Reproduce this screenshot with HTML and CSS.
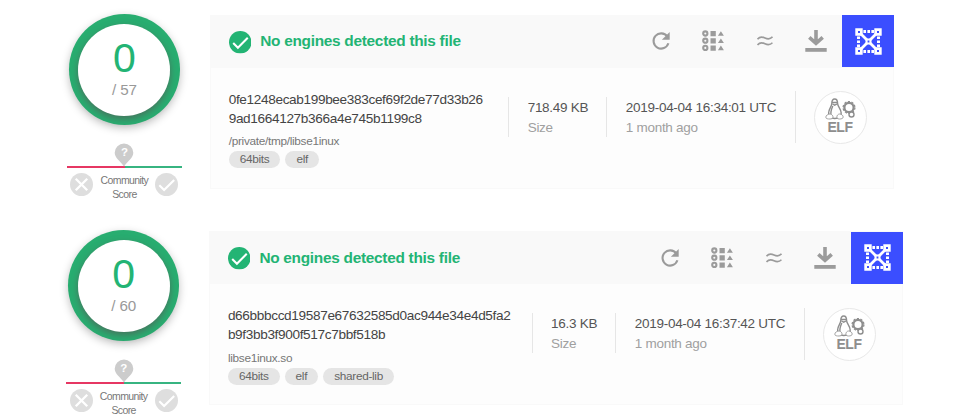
FILE: index.html
```
<!DOCTYPE html>
<html lang="en">
<head>
    <meta charset="UTF-8">
    <meta name="viewport" content="width=device-width, initial-scale=1.0">
    <title>File reports</title>
    <link rel="stylesheet" href="styles.css">
</head>
<body>
    <!-- Shared icons -->
    <svg class="sprite" width="0" height="0">
        <symbol id="icon-check" viewBox="0 0 24 24">
            <circle cx="12" cy="12" r="12" fill="currentColor"/>
            <path d="M4.5 12.8l5 5L20 7.2" fill="none" stroke="#fff" stroke-width="2.2"/>
        </symbol>
        <symbol id="icon-cross" viewBox="0 0 24 24">
            <circle cx="12" cy="12" r="12" fill="currentColor"/>
            <path d="M6 6l12 12M18 6L6 18" fill="none" stroke="#fff" stroke-width="2.4"/>
        </symbol>
        <symbol id="icon-pin" viewBox="0 0 20 24">
            <path d="M10 .5a9.3 9.3 0 0 1 9.3 9.3c0 5.2-5.5 8.2-9.3 13.7C6.2 18 .7 15 .7 9.8A9.3 9.3 0 0 1 10 .5z" fill="currentColor"/>
        </symbol>
        <symbol id="icon-refresh" viewBox="0 0 20 20">
            <path d="M16.3 5.5A7.6 7.6 0 1 0 17.4 12.3" fill="none" stroke="currentColor" stroke-width="2.1"/>
            <path d="M18.7 1v7.8h-7.8z" fill="currentColor"/>
        </symbol>
        <symbol id="icon-grid" viewBox="0 0 22 22">
            <g fill="none" stroke="currentColor" stroke-width="2.1">
                <circle cx="3.3" cy="3.5" r="2.1"/>
                <circle cx="3.3" cy="10.7" r="2.1"/>
                <circle cx="3.3" cy="17.9" r="2.1"/>
            </g>
            <path d="M8.500 1h5.300v5.300H8.500zM8.500 8.200h5.300v5.300H8.500zM8.500 15.400h5.300v5.300H8.500zM18.900 1.200l3 4.600h-6zM18.900 8.400l3 4.600h-6zM18.900 15.600l3 4.600h-6z" fill="currentColor"/>
        </symbol>
        <symbol id="icon-similar" viewBox="0 0 16 10">
            <path d="M.5 3.2C3 .2 5.500 .8 8 2s5 1.600 7.500-1.100M.5 9C3 6 5.500 6.600 8 7.800s5 1.600 7.500-1.100" fill="none" stroke="currentColor" stroke-width="1.600"/>
        </symbol>
        <symbol id="icon-download" viewBox="0 0 22 22">
            <path d="M11 0v12M4.3 7.300L11 13.300l6.700-6" fill="none" stroke="currentColor" stroke-width="3.600"/>
            <path d="M.3 18h21.400v3.800H.3z" fill="currentColor"/>
        </symbol>
        <symbol id="icon-graph" viewBox="0 0 27 27">
            <path d="M4 4l19 19M23 4L4 23" stroke="#fff" stroke-width="2.800"/>
            <path d="M8.400 3.500h10.600M8.400 23.500h10.600M3.500 8.400v10.600M23.500 8.400v10.600" stroke="#fff" stroke-width="3" stroke-dasharray="2.600 1.400"/>
            <path d="M.3.3h7.400v7.400H.3zM19.300.3h7.400v7.400h-7.400zM.3 19.300h7.400v7.400H.3zM19.300 19.300h7.400v7.400h-7.400zM10.500 10.500h6v6h-6z" fill="#fff"/>
            <path d="M3 3h2v2H3zM22 3h2v2h-2zM3 22h2v2H3zM22 22h2v2h-2zM12.600 12.600h1.800v1.800h-1.800z" fill="#3b4eff"/>
        </symbol>
        <symbol id="icon-linux" viewBox="0 0 31 22">
            <g fill="none" stroke="currentColor" stroke-width="1.400">
                <path d="M6.800 5.500C6.800 2.500 7.800 1 9.700 1s2.900 1.500 2.900 4.500c0 3 3.600 5.500 3.600 9.500 0 3-2 5.500-6.500 5.500S3.600 18 3.600 15c0-4 3.200-6.500 3.200-9.500z"/>
                <path d="M7 4.500h5.400M7.500 6l2.200 1.200L12 6M7.800 8c-1.500 3.500-2.300 5.500-1.800 8"/>
                <path d="M5 16c-2 0-4.200 1.500-4.200 3.200S3 21 5 21s3-1 3-2.200S6.500 16 5 16zM14.500 16c2 0 3.700 1.500 3.700 3S16.500 21 14.500 21s-2.600-1-2.600-2.200 1.100-2.800 2.600-2.800z" fill="#fff" stroke-width=".8"/>
            </g>
            <circle cx="24" cy="9.500" r="4.600" fill="none" stroke="currentColor" stroke-width="2.200"/>
            <circle cx="24" cy="9.500" r="5.900" fill="none" stroke="currentColor" stroke-width="1.300" stroke-dasharray="2.200 1.500"/>
            <circle cx="26.500" cy="16.500" r="2.500" fill="#fff" stroke="currentColor" stroke-width="1.400"/>
        </symbol>
    </svg>

    <section class="report">
        <aside class="score">
            <div class="ring">
                <div class="ring-inner">
                    <span class="positives">0</span>
                    <span class="total">/ 57</span>
                </div>
            </div>
            <div class="pin"><svg><use href="#icon-pin"/></svg><span>?</span></div>
            <div class="vote-bar"></div>
            <div class="votes">
                <svg><use href="#icon-cross"/></svg>
                <p>Community<br>Score</p>
                <svg><use href="#icon-check"/></svg>
            </div>
        </aside>
        <div class="card">
            <header class="card-header">
                <svg class="status"><use href="#icon-check"/></svg>
                <h2>No engines detected this file</h2>
                <div class="tool"><svg width="20" height="20"><use href="#icon-refresh"/></svg></div>
                <div class="tool"><svg width="22" height="22"><use href="#icon-grid"/></svg></div>
                <div class="tool"><svg width="16" height="10"><use href="#icon-similar"/></svg></div>
                <div class="tool"><svg width="22" height="22"><use href="#icon-download"/></svg></div>
                <div class="tool graph"><svg width="27" height="27"><use href="#icon-graph"/></svg></div>
            </header>
            <div class="card-body">
                <div class="file">
                    <div class="hash">0fe1248ecab199bee383cef69f2de77d33b26<br>9ad1664127b366a4e745b1199c8</div>
                    <div class="name">/private/tmp/libse1inux</div>
                    <div class="tags"><span>64bits</span><span>elf</span></div>
                </div>
                <div class="info">718.49 KB<small>Size</small></div>
                <div class="info">2019-04-04 16:34:01 UTC<small>1 month ago</small></div>
                <div class="type">
                    <div class="type-icon"><svg><use href="#icon-linux"/></svg><b>ELF</b></div>
                </div>
            </div>
        </div>
    </section>

    <section class="report report-wide">
        <aside class="score">
            <div class="ring">
                <div class="ring-inner">
                    <span class="positives">0</span>
                    <span class="total">/ 60</span>
                </div>
            </div>
            <div class="pin"><svg><use href="#icon-pin"/></svg><span>?</span></div>
            <div class="vote-bar"></div>
            <div class="votes">
                <svg><use href="#icon-cross"/></svg>
                <p>Community<br>Score</p>
                <svg><use href="#icon-check"/></svg>
            </div>
        </aside>
        <div class="card">
            <header class="card-header">
                <svg class="status"><use href="#icon-check"/></svg>
                <h2>No engines detected this file</h2>
                <div class="tool"><svg width="20" height="20"><use href="#icon-refresh"/></svg></div>
                <div class="tool"><svg width="22" height="22"><use href="#icon-grid"/></svg></div>
                <div class="tool"><svg width="16" height="10"><use href="#icon-similar"/></svg></div>
                <div class="tool"><svg width="22" height="22"><use href="#icon-download"/></svg></div>
                <div class="tool graph"><svg width="27" height="27"><use href="#icon-graph"/></svg></div>
            </header>
            <div class="card-body">
                <div class="file">
                    <div class="hash">d66bbbccd19587e67632585d0ac944e34e4d5fa2<br>b9f3bb3f900f517c7bbf518b</div>
                    <div class="name">libse1inux.so</div>
                    <div class="tags"><span>64bits</span><span>elf</span><span>shared-lib</span></div>
                </div>
                <div class="info">16.3 KB<small>Size</small></div>
                <div class="info">2019-04-04 16:37:42 UTC<small>1 month ago</small></div>
                <div class="type">
                    <div class="type-icon"><svg><use href="#icon-linux"/></svg><b>ELF</b></div>
                </div>
            </div>
        </div>
    </section>
</body>
</html>
```
FILE: styles.css
```
* {
    box-sizing: border-box;
}
body {
    margin: 0;
    background-color: #fff;
    font-family: "Liberation Sans", Arial, sans-serif;
    padding-top: 14px;
}
svg {
    display: block;
    flex: none;
}
.sprite {
    position: absolute;
}
.report {
    display: flex;
    align-items: flex-start;
    width: 894px;
    height: 216.4px;
    padding-left: 67.2px;
}
.report-wide {
    width: 903px;
    height: 188px;
    padding-left: 66.4px;
}

/* Detection ring and community votes */
.score {
    width: 114.5px;
    margin-right: 28px;
    flex: none;
    display: flex;
    flex-direction: column;
    align-items: center;
}
.ring {
    width: 111px;
    height: 111px;
    border-radius: 50%;
    padding: 9.5px;
    background-color: #28ad70;
    box-shadow: 0 3px 9px rgba(0, 0, 0, 0.25);
}
.ring-inner {
    width: 92px;
    height: 92px;
    border-radius: 50%;
    background-color: #fff;
    box-shadow: 0 3px 7px rgba(85, 90, 85, 0.7);
    display: flex;
    flex-direction: column;
    align-items: center;
    padding-top: 13px;
}
.positives {
    font-size: 41px;
    line-height: 43px;
    color: #23b474;
}
.total {
    font-size: 15.2px;
    line-height: 20px;
    letter-spacing: -0.1px;
    color: #999;
}
.pin {
    position: relative;
    width: 20px;
    height: 24px;
    margin-top: 18px;
    color: #ccc;
}
.pin svg {
    width: 20px;
    height: 24px;
}
.pin span {
    position: absolute;
    top: 3px;
    left: 0;
    width: 20px;
    text-align: center;
    font-size: 11.5px;
    line-height: 13px;
    font-weight: bold;
    color: #fff;
}
.vote-bar {
    width: 100%;
    height: 2px;
    margin-top: -1px;
    background: linear-gradient(to right, #e63763 50%, #37b481 50%);
}
.votes {
    width: 108px;
    display: flex;
    justify-content: space-between;
    padding-top: 5px;
}
.votes svg {
    width: 23px;
    height: 23px;
    color: #dedede;
}
.votes p {
    margin: 0;
    font-size: 10.5px;
    line-height: 14px;
    letter-spacing: -0.6px;
    text-align: center;
    color: #777;
}

/* File card */
.card {
    flex: 1;
    height: 174px;
    margin-top: 1px;
    background-color: #fdfdfd;
    box-shadow: inset 0 0 0 1px #f9f9f9;
}
.card-header {
    display: flex;
    align-items: center;
    height: 52.5px;
    background-color: #f9f9f9;
}
.status {
    width: 22.5px;
    height: 22.5px;
    margin: 2px 9px 0 19px;
    color: #23b474;
}
.card-header h2 {
    flex: 1;
    margin: 0;
    font-size: 15.4px;
    letter-spacing: -0.28px;
    color: #23b474;
    white-space: nowrap;
}
.tool {
    width: 51.8px;
    height: 52px;
    display: flex;
    align-items: center;
    justify-content: center;
    color: #9b9b9b;
}
.graph {
    background-color: #3b4eff;
}
.card-body {
    display: flex;
    padding: 22.2px 27.5px 0 19px;
    white-space: nowrap;
}
.file {
    flex: 1;
}
.hash {
    font-size: 13.6px;
    letter-spacing: -0.345px;
    line-height: 19.3px;
    color: #444;
}
.name {
    font-size: 11.8px;
    letter-spacing: -0.3px;
    line-height: 15px;
    margin-top: 6px;
    color: #777;
}
.tags {
    display: flex;
    gap: 5px;
    margin-top: 2px;
}
.tags span {
    height: 17px;
    padding: 0 11px;
    border-radius: 9px;
    background-color: #e5e5e5;
    font-size: 11.8px;
    letter-spacing: -0.3px;
    line-height: 17px;
    color: #666;
}
.info {
    height: 40px;
    margin-top: 7.3px;
    padding: 1px 18.3px 0;
    border-left: 1px solid #e6e6e6;
    font-size: 13.5px;
    letter-spacing: -0.28px;
    line-height: 20px;
    color: #555;
}
.info small {
    display: block;
    font-size: 13.5px;
    color: #a0a0a0;
}
.type {
    height: 52px;
    margin-top: 1.5px;
    padding-left: 18px;
    border-left: 1px solid #e6e6e6;
}
.type-icon {
    width: 53px;
    height: 53px;
    border: 1px solid #e8e8e8;
    border-radius: 50%;
    background-color: #fff;
    display: flex;
    flex-direction: column;
    align-items: center;
    padding-top: 6px;
    color: #8e8e8e;
}
.type-icon svg {
    width: 31px;
    height: 22px;
}
.type-icon b {
    font-size: 14px;
    line-height: 15px;
    letter-spacing: -0.5px;
}
```
